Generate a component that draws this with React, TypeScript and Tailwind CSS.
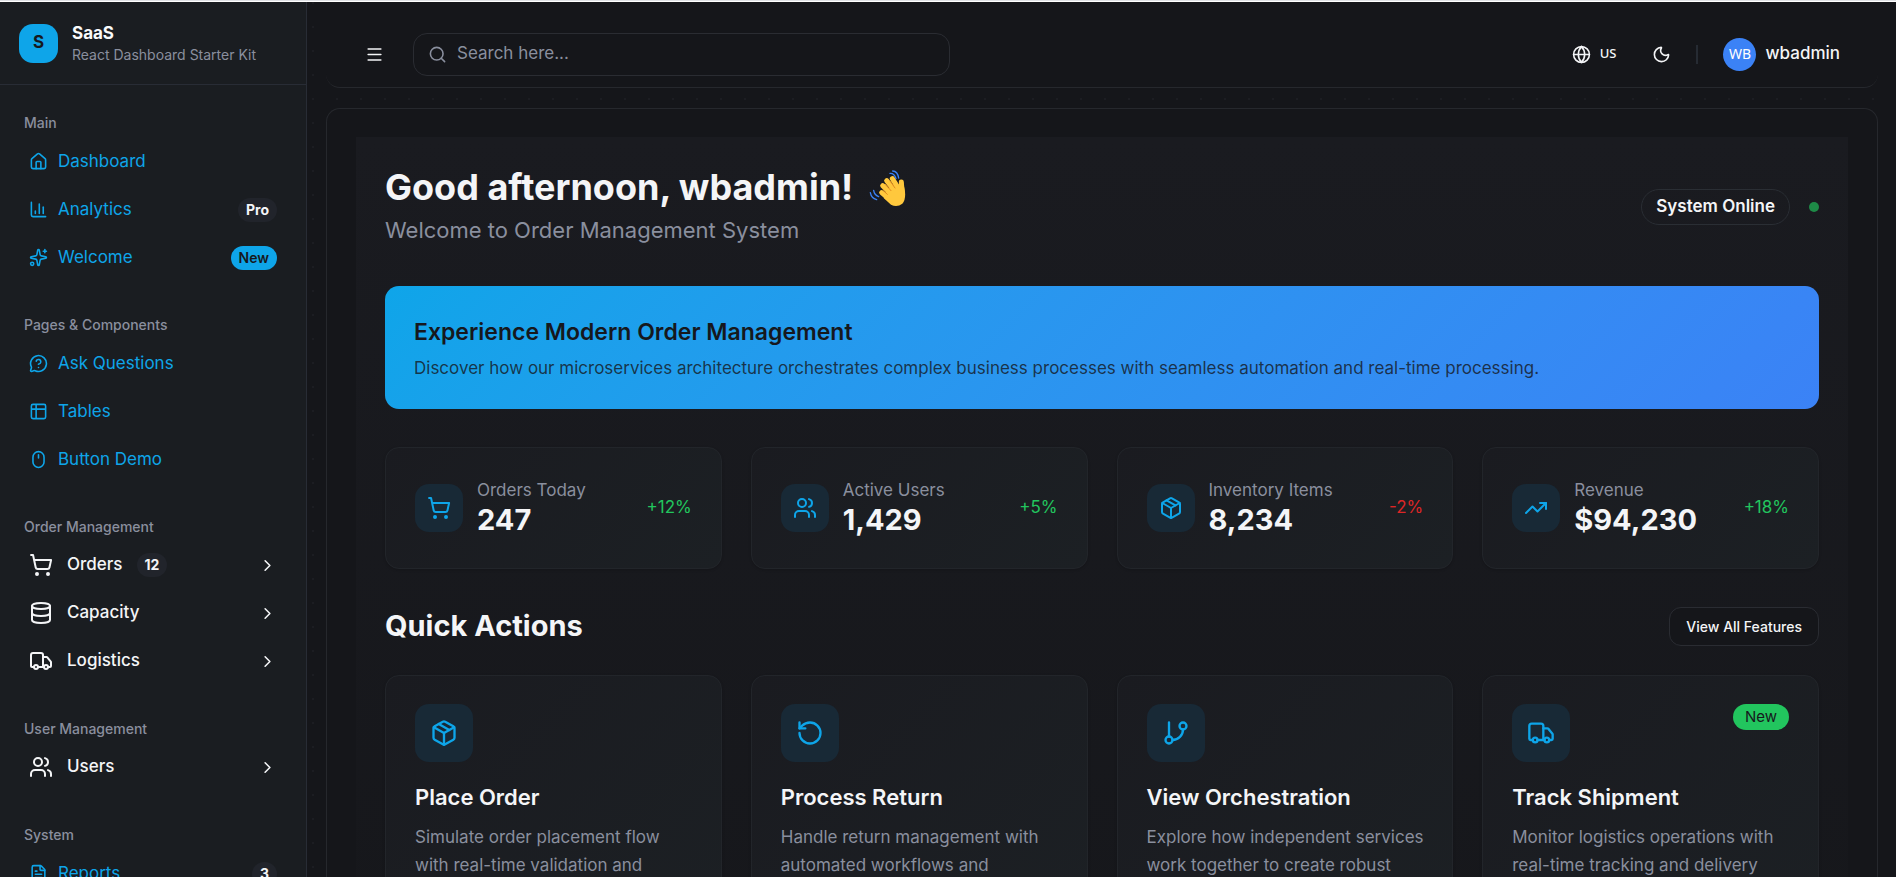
import React from "react";
import {
  House, ChartColumn, Sparkles, MessageCircleQuestion, Table2, Mouse, ShoppingCart, Database, Truck,
  Users, FileText, ChevronRight, Menu, Search, Globe, Moon, Package, TrendingUp, RotateCcw, GitBranch,
  type LucideIcon,
} from "lucide-react";

type NavLink = { icon: LucideIcon; label: string; badge?: string; accent?: boolean };
type NavGroup = { title: string; expandable?: boolean; items: NavLink[] };

const groups: NavGroup[] = [
  {
    title: "Main",
    items: [
      { icon: House, label: "Dashboard" },
      { icon: ChartColumn, label: "Analytics", badge: "Pro" },
      { icon: Sparkles, label: "Welcome", badge: "New", accent: true },
    ],
  },
  {
    title: "Pages & Components",
    items: [
      { icon: MessageCircleQuestion, label: "Ask Questions" },
      { icon: Table2, label: "Tables" },
      { icon: Mouse, label: "Button Demo" },
    ],
  },
  {
    title: "Order Management",
    expandable: true,
    items: [
      { icon: ShoppingCart, label: "Orders", badge: "12" },
      { icon: Database, label: "Capacity" },
      { icon: Truck, label: "Logistics" },
    ],
  },
  { title: "User Management", expandable: true, items: [{ icon: Users, label: "Users" }] },
  { title: "System", items: [{ icon: FileText, label: "Reports", badge: "3" }] },
];

const stats = [
  { icon: ShoppingCart, label: "Orders Today", value: "247", change: "+12%" },
  { icon: Users, label: "Active Users", value: "1,429", change: "+5%" },
  { icon: Package, label: "Inventory Items", value: "8,234", change: "-2%" },
  { icon: TrendingUp, label: "Revenue", value: "$94,230", change: "+18%" },
];

const actions = [
  { icon: Package, title: "Place Order", text: "Simulate order placement flow with real-time validation and processing" },
  { icon: RotateCcw, title: "Process Return", text: "Handle return management with automated workflows and processing" },
  { icon: GitBranch, title: "View Orchestration", text: "Explore how independent services work together to create robust workflows" },
  { icon: Truck, title: "Track Shipment", text: "Monitor logistics operations with real-time tracking and delivery updates", badge: "New" },
];

function WavingHand() {
  return (
    <svg role="img" aria-label="Waving hand" viewBox="24 24 114 114" className="size-[38px]" fill="none" strokeLinecap="round">
      <g stroke="#3b82f6" strokeWidth="4">
        <path d="M95 30Q110 31 113 51" />
        <path d="M87 37Q100 36 105 53" />
        <path d="M28 95Q31 112 47 116" />
        <path d="M38 88Q40 102 53 107" />
      </g>
      <g stroke="#ffc83d" strokeWidth="15">
        <path d="M62 95L92 120" />
        <path d="M65 74L100 108" />
        <path d="M77 59L108 98" />
        <path d="M94 53L116 88" />
        <path d="M121 63L124 102" />
      </g>
      <path d="M78 84L108 72L129 76Q138 112 124 128Q108 140 90 131L68 111Z" fill="#ffc83d" />
      <g stroke="#e38b1d" strokeWidth="3">
        <path d="M66 88L79 100" />
        <path d="M73 70L90 89" />
        <path d="M87 60L102 81" />
      </g>
    </svg>
  );
}

function Badge({ children, accent }: { children: React.ReactNode; accent?: boolean }) {
  return (
    <span
      className={
        accent
          ? "flex h-6 items-center rounded-full bg-[#0ea5e9] px-2 text-sm font-semibold text-[#16181d]"
          : "flex h-6 items-center rounded-full bg-[#21242b] px-2 text-sm font-bold text-[#f4f5f7]"
      }
    >
      {children}
    </span>
  );
}

function Sidebar() {
  return (
    <aside className="flex w-[307px] shrink-0 flex-col overflow-hidden border-r border-[#282c35] bg-[#1a1d21]">
      <div className="flex h-[83px] shrink-0 items-center gap-[14px] border-b border-[#282c35] px-[19px]">
        <div className="flex size-[39px] items-center justify-center rounded-[14px] bg-[#0ea5e9] text-[17px] font-bold text-[#16181d]">S</div>
        <div className="pt-[2px]">
          <p className="text-[17px] leading-[22px] font-bold text-[#f9fafb]">SaaS</p>
          <p className="text-sm leading-[22px] text-[#8a8f9e]">React Dashboard Starter Kit</p>
        </div>
      </div>
      <nav className="flex flex-col gap-[29px] px-[19px] pt-6">
        {groups.map((group) => (
          <section key={group.title}>
            <h2 className="flex h-[29px] items-center px-[5px] pb-[2px] text-sm font-medium text-[#8a8f9e]">{group.title}</h2>
            {group.items.map(({ icon: Icon, label, badge, accent }) =>
              group.expandable ? (
                <button key={label} type="button" className="flex h-12 w-full items-center px-[10px] pb-[2px] text-[17px] font-medium text-[#f4f5f7]">
                  <Icon className="mr-[14px] size-6" />
                  <span className="mr-[14px]">{label}</span>
                  {badge && <Badge>{badge}</Badge>}
                  <ChevronRight className="ml-auto size-[19px]" />
                </button>
              ) : (
                <a key={label} href="#" className="flex h-12 items-center gap-[10px] px-[10px] pb-px text-[17px] text-[#0ea5e9]">
                  <Icon className="size-[19px]" />
                  <span className="flex-1">{label}</span>
                  {badge && <Badge accent={accent}>{badge}</Badge>}
                </a>
              ),
            )}
          </section>
        ))}
      </nav>
    </aside>
  );
}

function Header() {
  return (
    <header className="flex h-[86px] shrink-0 items-center rounded-b-[14px] border-b border-[#26282d] bg-[#15161a] pt-[19px] pr-[38px] pl-[39px]">
      <button type="button" aria-label="Toggle menu" className="flex h-[38px] items-center text-[#f4f5f7]">
        <Menu className="size-[19px]" />
      </button>
      <label className="ml-[29px] flex h-[43px] w-full max-w-[537px] items-center gap-[10px] rounded-[14px] border border-[#2a2c32] px-[14px] text-[#8a8f9e]">
        <Search className="size-[19px] shrink-0" />
        <input type="search" aria-label="Search" placeholder="Search here..." className="w-full bg-transparent text-[17px] outline-none placeholder:text-[#8a8f9e]" />
      </label>
      <div className="ml-auto flex items-center">
        <button type="button" className="flex items-center gap-[9px] text-[#f4f5f7]">
          <Globe className="size-[19px]" />
          <span className="font-['Noto_Sans',sans-serif] text-[13px] font-medium">US</span>
        </button>
        <button type="button" aria-label="Toggle theme" className="ml-9 text-[#f4f5f7]">
          <Moon className="size-[19px]" />
        </button>
        <span className="mx-[25px] h-[19px] w-[2px] bg-[#262b33]" />
        <button type="button" className="flex items-center gap-[9px] text-[#f4f5f7]">
          <span className="flex size-[33px] items-center justify-center rounded-full bg-[#3b82f6] font-['Noto_Sans',sans-serif] text-sm text-white">WB</span>
          <span className="text-[17px] font-medium">wbadmin</span>
        </button>
      </div>
    </header>
  );
}

function StatCard({ icon: Icon, label, value, change }: (typeof stats)[number]) {
  return (
    <article className="flex h-[122px] items-center gap-[14px] rounded-[14px] border border-[#22252a] bg-linear-135 from-[#1a1b20] to-[#1c2024] px-[29px] shadow-sm">
      <span className="flex size-12 items-center justify-center rounded-[14px] bg-[#182936] text-[#0ea5e9]">
        <Icon className="size-6" />
      </span>
      <div className="flex-1">
        <p className="text-[17px] leading-6 text-[#8a8f9e]">{label}</p>
        <p className="text-[29px] leading-9 font-bold text-[#f4f5f7]">{value}</p>
      </div>
      <span className={change.startsWith("-") ? "text-[17px] text-[#dc2626]" : "text-[17px] text-[#22c55e]"}>{change}</span>
    </article>
  );
}

function ActionCard({ icon: Icon, title, text, badge }: (typeof actions)[number]) {
  return (
    <article className="rounded-[14px] border border-[#22252a] bg-linear-135 from-[#1a1b20] to-[#1c2024] py-7 pr-[27px] pl-[29px] shadow-sm">
      <div className="flex items-start justify-between pr-[2px]">
        <span className="flex size-[58px] items-center justify-center rounded-[14px] bg-[#182936] text-[#0ea5e9]">
          <Icon className="size-7" />
        </span>
        {badge && <span className="flex h-[26px] items-center rounded-full bg-[#22c55e] px-3 text-[15px] text-[#16181d]">{badge}</span>}
      </div>
      <h3 className="mt-5 text-[22px] leading-[30px] font-semibold text-[#f4f5f7]">{title}</h3>
      <p className="mt-[11px] text-[17px] leading-7 text-[#8a8f9e]">{text}</p>
    </article>
  );
}

export default function App() {
  return (
    <div className="flex h-screen flex-col overflow-hidden bg-[#15161a] font-['Inter',sans-serif]">
      <div className="h-[2px] shrink-0 border-b border-white bg-[#dfe1e5]" />
      <div className="flex min-h-0 flex-1 bg-[radial-gradient(circle_at_1px_1px,#1c1d22_1px,transparent_1px)] bg-size-[24px_24px]">
        <Sidebar />
        <div className="flex min-w-0 flex-1 flex-col pr-[18px] pl-[19px]">
          <Header />
          <main className="mt-5 min-h-0 flex-1 overflow-hidden rounded-t-[14px] border border-b-0 border-[#26282d] bg-[#15161a] px-[29px] pt-7">
            <div className="bg-linear-to-b from-[#1a1b20] to-[#16171b] px-[29px] pt-7 pb-8">
              <div className="flex items-center justify-between">
                <div>
                  <h1 className="flex items-center gap-4 pt-px text-4xl leading-[43px] font-bold text-[#f4f5f7]">
                    Good afternoon, wbadmin! <WavingHand />
                  </h1>
                  <p className="mt-[5px] mb-[2px] text-[22px] leading-8 text-[#8a8f9e]">Welcome to Order Management System</p>
                </div>
                <div className="flex items-center gap-[19px]">
                  <span className="flex h-9 items-center rounded-full border border-[#2a2e34] px-[14px] text-[17px] font-semibold text-[#f4f5f7]">System Online</span>
                  <span className="size-[10px] rounded-full bg-[#1e8a47]" />
                </div>
              </div>

              <section className="mt-[38px] rounded-[14px] bg-linear-135 from-[#0ea5e9] to-[#3b82f6] px-[29px] pt-[29px] pb-[27px]">
                <h2 className="text-[23px] leading-[34px] font-semibold text-[#16181d]">Experience Modern Order Management</h2>
                <p className="mt-[5px] text-[17px] leading-7 text-[#16181d]/80">
                  Discover how our microservices architecture orchestrates complex business processes with seamless automation and real-time processing.
                </p>
              </section>

              <section className="mt-[38px] grid grid-cols-4 gap-[29px]">
                {stats.map((s) => (
                  <StatCard key={s.label} {...s} />
                ))}
              </section>

              <div className="mt-[38px] flex items-center justify-between">
                <h2 className="pb-[2px] text-[29px] leading-9 font-bold text-[#f4f5f7]">Quick Actions</h2>
                <button type="button" className="h-[39px] rounded-xl border border-[#2a2c32] bg-[#15161a] px-4 text-sm font-medium text-[#f4f5f7]">View All Features</button>
              </div>

              <section className="mt-[29px] grid grid-cols-4 gap-[29px]">
                {actions.map((a) => (
                  <ActionCard key={a.title} {...a} />
                ))}
              </section>
            </div>
          </main>
        </div>
      </div>
    </div>
  );
}
